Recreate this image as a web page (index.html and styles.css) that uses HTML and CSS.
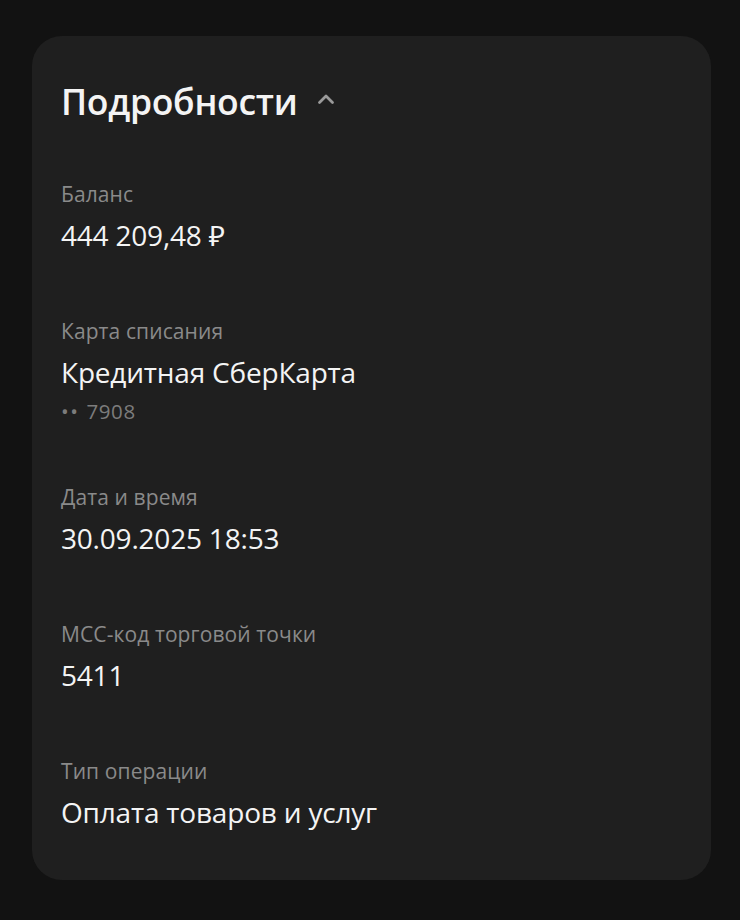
FILE: index.html
```html
<!DOCTYPE html>
<html lang="ru">
<head>
<meta charset="utf-8">
<link rel="stylesheet" href="styles.css">
</head>
<body>
<section class="card">
  <div class="head">
    <h2 class="title">Подробности</h2>
    <svg class="chev" width="18" height="12" viewBox="0 0 18 12"><path d="M2.5 9.5 L9 3 L15.5 9.5" fill="none" stroke="#9a9a9a" stroke-width="2.8" stroke-linecap="round" stroke-linejoin="round"/></svg>
  </div>
  <div class="item">
    <div class="label">Баланс</div>
    <div class="value">444 209,48 ₽</div>
  </div>
  <div class="item">
    <div class="label">Карта списания</div>
    <div class="value">Кредитная СберКарта</div>
    <div class="sub"><span class="dots">••</span><span class="num">7908</span></div>
  </div>
  <div class="item">
    <div class="label">Дата и время</div>
    <div class="value">30.09.2025 18:53</div>
  </div>
  <div class="item">
    <div class="label">МСС-код торговой точки</div>
    <div class="value">5411</div>
  </div>
  <div class="item">
    <div class="label">Тип операции</div>
    <div class="value">Оплата товаров и услуг</div>
  </div>
</section>
</body>
</html>
```
FILE: styles.css
```css
html, body {
  margin: 0;
  padding: 0;
  background: #121212;
}
body {
  font-family: "Open Sans", "Noto Sans", sans-serif;
  color: #f4f4f4;
  padding: 36px 29px 40px 32px;
}
.card {
  background: #1f1f1f;
  border-radius: 30px;
  padding: 45px 29px 51px 29px;
  display: flex;
  flex-direction: column;
  gap: 67px;
}
.head {
  display: flex;
  align-items: center;
  gap: 20px;
  height: 40px;
  margin-bottom: -6px;
}
.title {
  margin: 0;
  font-size: 35.5px;
  font-weight: 600;
  line-height: 40px;
  letter-spacing: -0.3px;
}
.chev {
  margin-top: -4px;
}
.item {
  display: flex;
  flex-direction: column;
}
.label {
  font-size: 21px;
  line-height: 24px;
  color: #8a8a8a;
  margin-bottom: 12px;
  letter-spacing: 0.1px;
}
.value {
  font-size: 28px;
  line-height: 34px;
  color: #f4f4f4;
  letter-spacing: -0.2px;
}
.sub {
  display: flex;
  align-items: baseline;
  gap: 7px;
  font-size: 20.5px;
  line-height: 20px;
  color: #7c7c7c;
  margin-top: 12px;
  margin-bottom: -3px;
  letter-spacing: 0.6px;
}
.dots {
  letter-spacing: 1.5px;
}
```
